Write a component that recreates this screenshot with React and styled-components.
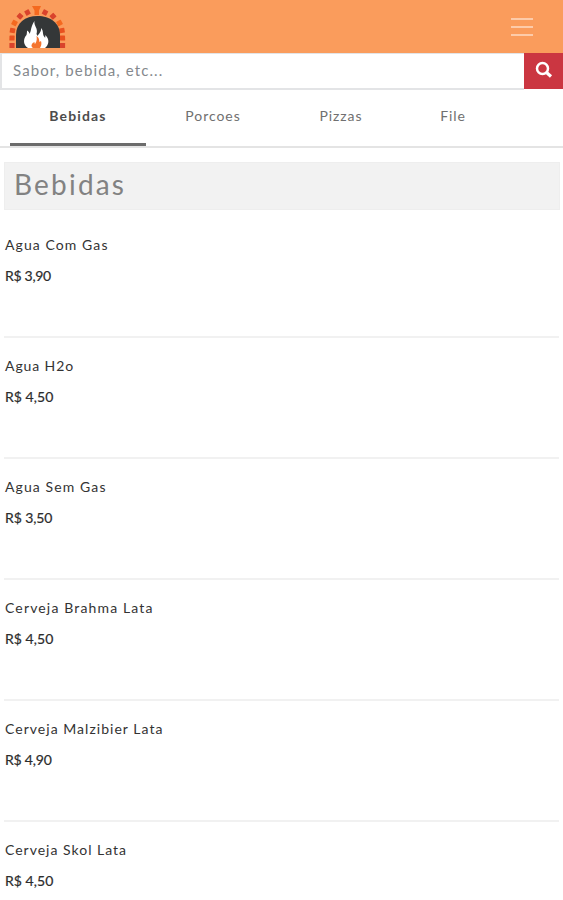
import React from 'react'
import styled, { createGlobalStyle } from 'styled-components'

const items = [
  { name: 'Agua Com Gas', price: 'R$ 3,90', space: '1.08px', tight: '-0.3px' },
  { name: 'Agua H2o', price: 'R$ 4,50', space: '0.9px', tight: '0.05px' },
  { name: 'Agua Sem Gas', price: 'R$ 3,50', space: '1.1px', tight: '-0.1px' },
  { name: 'Cerveja Brahma Lata', price: 'R$ 4,50', space: '1.15px', tight: '0.05px' },
  { name: 'Cerveja Malzibier Lata', price: 'R$ 4,90', space: '1.03px', tight: '-0.2px' },
  { name: 'Cerveja Skol Lata', price: 'R$ 4,50', space: '1px', tight: '0.05px' },
]

const bricks = [
  [12, 45.5, 0, '#d9432c'], [12, 38, 2, '#e8501f'], [12.5, 30.5, 10, '#e8501f'],
  [14.5, 23, 28, '#f4691f'], [20, 16.2, 42, '#d9432c'], [27.5, 12.5, 62, '#d9432c'],
  [45, 12.5, -62, '#d9432c'], [53, 16.2, -42, '#d9432c'], [59.5, 23, -28, '#f4691f'],
  [62, 30.5, -10, '#e8501f'], [62.5, 38, -2, '#e8501f'], [62.5, 45.5, 0, '#d9432c'],
]

const Logo = () => (
  <LogoSvg viewBox="0 0 75 53">
    {bricks.map(([x, y, turn, fill], i) => (
      <rect
        key={i}
        x={x - 2.6}
        y={y - 2.5}
        width="5.2"
        height="5"
        rx="0.5"
        fill={fill}
        transform={`rotate(${turn} ${x} ${y})`}
      />
    ))}
    <path d="M32 6h9l-2 4.500v4.500h-4.500v-4.500z" fill="#f4691f" />
    <path d="M16 48V35C16 23 25 16 37.500 16S60 23 60 35v13z" fill="#343738" />
    <path d="M28 48c-5-3-5-9-1.500-13 .5-2 .5-3 .5-4.500 1.500 1 2.500 2 2.500 3.500 2-4 1-7 5-13-1 5 4 7 2 13l1 2c1-2 4-4 3.500-8 3 3 1 6 3.500 9 1 2 1-1 .5-2 5 4 4 10 0 13z" fill="#fff" />
    <path d="M33 48c-3-2-1-5 1.500-6 0 1 0 1 .5 2 2-3 2-5 1.500-8 3 2 2.500 4 3 6l1.500-1c1 3 0 5-1 7z" fill="#f4742e" />
  </LogoSvg>
)

const App = () => {
  return (
    <Page>
      <GlobalStyle />
      <Header>
        <Logo />
        <Menu>
          <span />
          <span />
          <span />
        </Menu>
      </Header>
      <Search>
        <Input placeholder="Sabor, bebida, etc..." />
        <SearchButton>
          <svg width="18" height="18" viewBox="0 0 18 18" fill="none" stroke="#fff">
            <circle cx="7.500" cy="7.500" r="5.500" strokeWidth="2.500" />
            <path d="M11.800 11.800L16 15.500" strokeWidth="3.200" />
          </svg>
        </SearchButton>
      </Search>
      <Tabs>
        <Tab width="136px" active>Bebidas</Tab>
        <Tab width="134px">Porcoes</Tab>
        <Tab width="122px">Pizzas</Tab>
        <Tab width="102px">File</Tab>
      </Tabs>
      <Title>Bebidas</Title>
      <List>
        {items.map(item => (
          <Item key={item.name}>
            <Name space={item.space}>{item.name}</Name>
            <Price space={item.tight}>{item.price}</Price>
          </Item>
        ))}
      </List>
    </Page>
  )
}

export default App

const GlobalStyle = createGlobalStyle`
  * {
    box-sizing: border-box;
  }
  body {
    margin: 0;
    background: #fff;
    overflow: hidden;
  }
`

const Page = styled.div`
  width: 100%;
  height: 900px;
  overflow: hidden;
  font-family: Lato, "Liberation Sans", sans-serif;
`

const Header = styled.div`
  display: flex;
  justify-content: space-between;
  align-items: center;
  height: 53px;
  padding-right: 30px;
  background: #fa9c5c;
`

const LogoSvg = styled.svg`
  width: 75px;
  height: 53px;
`

const Menu = styled.div`
  display: flex;
  flex-direction: column;
  gap: 6px;
  width: 22px;

  span {
    height: 2px;
    background: #fdcba9;
  }
`

const Search = styled.div`
  display: flex;
  height: 37px;
`

const Input = styled.input`
  flex: 1;
  min-width: 0;
  padding: 0 0 2px 11px;
  border: 2px solid #e3e4e6;
  border-top-width: 1px;
  border-right: none;
  outline: none;
  font-family: inherit;
  font-size: 15px;
  letter-spacing: 1.12px;
  color: #555;

  &::placeholder {
    color: #85898d;
    opacity: 1;
  }
`

const SearchButton = styled.div`
  display: flex;
  align-items: center;
  justify-content: center;
  width: 39px;
  height: 36px;
  padding-bottom: 3px;
  background: #cb3641;
`

const Tabs = styled.div`
  display: flex;
  height: 58px;
  padding-left: 10px;
  border-bottom: 2px solid #e4e4e4;
`

const Tab = styled.div.withConfig({ shouldForwardProp: prop => prop !== 'width' && prop !== 'active' })`
  width: ${props => props.width};
  height: 56px;
  padding-top: 16px;
  border-bottom: ${props => (props.active ? '3px solid #6c6c6c' : 'none')};
  line-height: 20px;
  text-align: center;
  font-size: 14px;
  font-weight: ${props => (props.active ? 700 : 400)};
  letter-spacing: ${props => (props.active ? '1.15px' : '0.95px')};
  color: ${props => (props.active ? '#4c4c4c' : '#707070')};
`

const Title = styled.div`
  height: 48px;
  margin: 14px 3px 0 4px;
  padding-left: 9px;
  border: 1px solid #eeeeee;
  background: #f2f2f2;
  font-size: 28px;
  line-height: 42px;
  letter-spacing: 2.2px;
  color: #828282;
`

const List = styled.div`
  margin: 7px 4px 0;
`

const Item = styled.div`
  display: flex;
  flex-direction: column;
  gap: 11px;
  height: 121px;
  padding: 18px 1px 0;
  border-bottom: 2px solid #f1f1f1;
`

const Name = styled.div.withConfig({ shouldForwardProp: prop => prop !== 'space' })`
  font-size: 14px;
  line-height: 20px;
  letter-spacing: ${props => props.space};
  color: #333;
`

const Price = styled.div.withConfig({ shouldForwardProp: prop => prop !== 'space' })`
  font-size: 14px;
  line-height: 20px;
  letter-spacing: ${props => props.space};
  color: #2c2c2c;
  -webkit-text-stroke: 0.2px #2c2c2c;
`
